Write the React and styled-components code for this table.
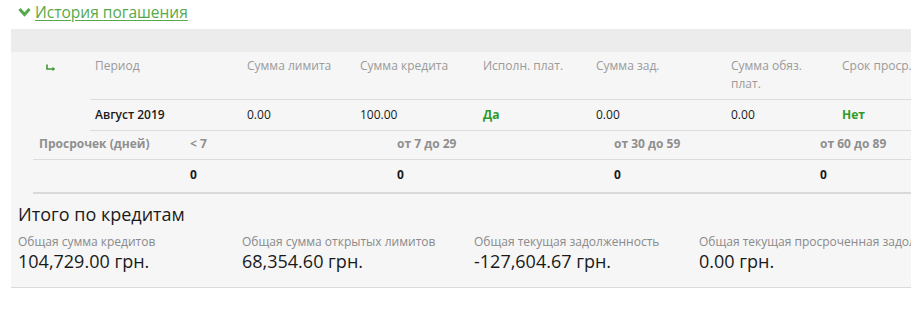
import React from "react"
import styled, { createGlobalStyle } from "styled-components"

const GlobalStyle = createGlobalStyle`
  body {
    margin: 0;
    background: #fff;
    font-family: "Open Sans", "Liberation Sans", sans-serif;
    color: #222;
  }
`

const Page = styled.div`
  width: 911px;
  overflow: hidden;
`

const Toggle = styled.a`
  display: inline-flex;
  align-items: center;
  margin: 1px 0 0 18px;
  height: 22px;
  color: #55a94a;
  font-size: 15.5px;
  text-decoration: underline;
  text-underline-offset: 2px;
  cursor: pointer;

  svg {
    margin-right: 4px;
  }
`

const Panel = styled.section`
  margin: 6px 0 0 11px;
`

const Band = styled.div`
  height: 23px;
  background: #ececec;
`

const TableArea = styled.div`
  background: #f6f6f6;
  padding-left: 22px;
  overflow: hidden;
`

const Table = styled.table`
  border-collapse: collapse;
  table-layout: fixed;
  width: ${p => p.$width}px;
  font-size: 12px;
  line-height: 18px;
`

const Th = styled.th`
  text-align: left;
  vertical-align: top;
  font-weight: 400;
  color: #9a9a9a;
  padding: 5px 5px 6px;
  border-bottom: ${p => (p.$plain ? "none" : "1px solid #dcdcdc")};
`

const Td = styled.td`
  padding: 6px 5px;
  white-space: nowrap;
  font-weight: ${p => (p.$bold ? 700 : p.$semi ? 600 : 400)};
  color: ${p => (p.$green ? "#2e9a2a" : "#1a1a1a")};
  border-bottom: ${p => (p.$plain ? "none" : "1px solid #dcdcdc")};
`

const OverdueCell = styled.td`
  white-space: nowrap;
  font-weight: 700;
  color: ${p => (p.$muted ? "#8f8f8f" : "#1a1a1a")};
  padding: ${p => (p.$last ? "6px 5px 8px" : "4px 5px 6px")};
  padding-left: ${p => (p.$label ? "6px" : "5px")};
  border-bottom: ${p => (p.$last ? "2px solid #d9d9d9" : "1px solid #dcdcdc")};
`

const Totals = styled.div`
  background: #f6f6f6;
  border-bottom: 1px solid #dadada;
  padding: 8px 0 15px 7px;
`

const TotalsTitle = styled.h3`
  margin: 0 0 8px;
  font-size: 18px;
  line-height: 24px;
  font-weight: 400;
  color: #1a1a1a;
`

const TotalsGrid = styled.div`
  display: grid;
  grid-template-columns: 224px 232px 225px 1fr;
`

const Stat = styled.div`
  white-space: nowrap;
  overflow: hidden;
`

const StatLabel = styled.div`
  font-size: 12px;
  line-height: 16px;
  color: #8a8a8a;
`

const StatValue = styled.div`
  font-size: 18px;
  line-height: 22px;
  color: #1a1a1a;
`

const Chevron = () => (
  <svg width="13" height="10" viewBox="0 0 13 10">
    <path d="M1.5 2 L6.5 7.5 L11.5 2" fill="none" stroke="#55a94a" strokeWidth="3" />
  </svg>
)

const SubArrow = () => (
  <svg width="10" height="8" viewBox="0 0 10 8">
    <path d="M1 0.5 V5 H8" fill="none" stroke="#3d9a33" strokeWidth="1.6" />
    <path d="M6.5 2.8 L9.2 5 L6.5 7.2 Z" fill="#3d9a33" />
  </svg>
)

const historyCols = [57, 152, 113, 123, 113, 135, 111, 120]
const overdueCols = [152, 207, 217, 206, 120]

const totals = [
  ["Общая сумма кредитов", "104,729.00 грн."],
  ["Общая сумма открытых лимитов", "68,354.60 грн."],
  ["Общая текущая задолженность", "-127,604.67 грн."],
  ["Общая текущая просроченная задолженность", "0.00 грн."],
]

export default function App() {
  return (
    <Page>
      <GlobalStyle />
      <Toggle>
        <Chevron />
        История погашения
      </Toggle>
      <Panel>
        <Band />
        <TableArea>
          <Table $width={historyCols.reduce((a, b) => a + b, 0)}>
            <colgroup>
              {historyCols.map((w, i) => <col key={i} style={{ width: w }} />)}
            </colgroup>
            <thead>
              <tr>
                <Th $plain style={{ paddingLeft: 13, paddingTop: 7 }}><SubArrow /></Th>
                <Th>Период</Th>
                <Th>Сумма лимита</Th>
                <Th>Сумма кредита</Th>
                <Th>Исполн. плат.</Th>
                <Th>Сумма зад.</Th>
                <Th>Сумма обяз. плат.</Th>
                <Th>Срок проср.</Th>
              </tr>
            </thead>
            <tbody>
              <tr>
                <Td $plain />
                <Td $semi>Август 2019</Td>
                <Td>0.00</Td>
                <Td>100.00</Td>
                <Td $bold $green>Да</Td>
                <Td>0.00</Td>
                <Td>0.00</Td>
                <Td $bold $green>Нет</Td>
              </tr>
            </tbody>
          </Table>
          <Table $width={overdueCols.reduce((a, b) => a + b, 0)}>
            <colgroup>
              {overdueCols.map((w, i) => <col key={i} style={{ width: w }} />)}
            </colgroup>
            <tbody>
              <tr>
                <OverdueCell $muted $label>Просрочек (дней)</OverdueCell>
                <OverdueCell $muted>&lt; 7</OverdueCell>
                <OverdueCell $muted>от 7 до 29</OverdueCell>
                <OverdueCell $muted>от 30 до 59</OverdueCell>
                <OverdueCell $muted>от 60 до 89</OverdueCell>
              </tr>
              <tr>
                <OverdueCell $last $label />
                <OverdueCell $last>0</OverdueCell>
                <OverdueCell $last>0</OverdueCell>
                <OverdueCell $last>0</OverdueCell>
                <OverdueCell $last>0</OverdueCell>
              </tr>
            </tbody>
          </Table>
        </TableArea>
        <Totals>
          <TotalsTitle>Итого по кредитам</TotalsTitle>
          <TotalsGrid>
            {totals.map(([label, value]) => (
              <Stat key={label}>
                <StatLabel>{label}</StatLabel>
                <StatValue>{value}</StatValue>
              </Stat>
            ))}
          </TotalsGrid>
        </Totals>
      </Panel>
    </Page>
  )
}
